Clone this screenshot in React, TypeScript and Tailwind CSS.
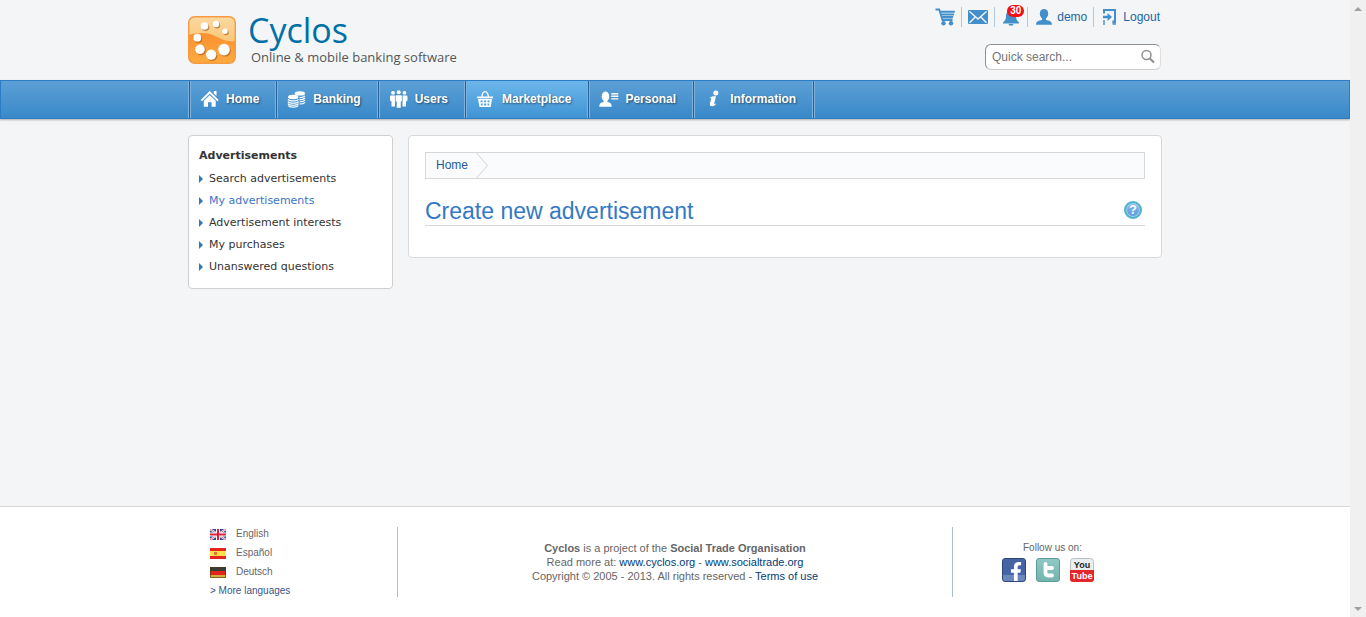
import type { ReactNode } from "react";
import { FaFacebookF } from "react-icons/fa";

function Logo() {
  const dots = [
    [16.5, 10, 3.8],
    [28, 8, 3.2],
    [37, 15.3, 2.7],
    [9.3, 21.7, 3.9],
    [12, 33.3, 4.8],
    [23.2, 38.6, 5.2],
    [36, 33.6, 5.8],
  ];
  return (
    <svg viewBox="0 0 48 48" className="size-12" aria-hidden="true">
      <defs>
        <linearGradient id="logo-top" x1="0" y1="0" x2="0" y2="1">
          <stop offset="0" stopColor="#fbd9a2" />
          <stop offset="0.7" stopColor="#f8c269" />
        </linearGradient>
        <linearGradient id="logo-wave" x1="0" y1="0" x2="0" y2="1">
          <stop offset="0" stopColor="#fb9030" />
          <stop offset="1" stopColor="#fbac3e" />
        </linearGradient>
      </defs>
      <rect x="0.7" y="0.7" width="46.6" height="46.6" rx="6" fill="url(#logo-top)" />
      <path
        d="M.7 19C9 16.500 18 16 26 19.500C34 23.500 39 26 47.300 25V41.300A6 6 0 0 1 41.300 47.300H6.700A6 6 0 0 1 .7 41.300Z"
        fill="url(#logo-wave)"
      />
      <rect x="0.7" y="0.7" width="46.6" height="46.6" rx="6" fill="none" stroke="#f69a45" strokeWidth="1.4" />
      {dots.map(([x, y, r]) => (
        <g key={x}>
          <circle cx={x + 1} cy={y + 1.2} r={r} fill="#a4500f" opacity="0.6" />
          <circle cx={x} cy={y} r={r} fill="#fff" />
        </g>
      ))}
    </svg>
  );
}

function Icon({ children }: { children: ReactNode }) {
  return (
    <svg viewBox="0 0 20 20" className="size-5 shrink-0" fill="currentColor" aria-hidden="true">
      {children}
    </svg>
  );
}

const cart = (
  <Icon>
    <path d="M.5 2.500H4.200L7.500 13H17.500" fill="none" stroke="currentColor" strokeWidth="1.800" />
    <path d="M5 3.800H20L19.500 5.800H5.500ZM6 6.400H19.200L18.700 8.500H6.500ZM6.900 9.100H18.300L17.700 11.400H7.500Z" />
    <circle cx="8.500" cy="16.300" r="2.200" />
    <circle cx="16" cy="16.300" r="2.200" />
  </Icon>
);
const mail = (
  <Icon>
    <rect x="0" y="3" width="20" height="14" rx="1" />
    <path d="M1.500 4.500L10 12L18.500 4.500M1.500 15.800L7.200 10M18.500 15.800L12.800 10" fill="none" stroke="#f3f5f7" strokeWidth="1.400" />
  </Icon>
);
const bell = (
  <Icon>
    <path d="M10 3.500C6.600 3.500 5 6 5 9C5 12 4.300 13.500 2 15.500V16.500H18V15.500C15.700 13.500 15 12 15 9C15 6 13.400 3.500 10 3.500ZM7.500 17H12.500A2.500 1.800 0 0 1 7.500 17Z" />
  </Icon>
);
const person = (
  <Icon>
    <ellipse cx="10" cy="6.800" rx="4.200" ry="4.900" />
    <path d="M8 10H12V13C15 13.500 18 14.200 18 17.800H2C2 14.200 5 13.500 8 13Z" />
  </Icon>
);
const logout = (
  <Icon>
    <path d="M4 6.500V3H15V15.500H12.500" fill="none" stroke="currentColor" strokeWidth="2" />
    <path d="M12.500 13H16V18H12.500ZM3 13H5V18H3Z" opacity="0.7" />
    <path d="M3 8.800H7.500V6L12 10L7.500 14V11.200H3Z" />
  </Icon>
);
const home = (
  <Icon>
    <path d="M9.700 2L18.700 11L17.400 12.200L9.700 4.800L2 12.200L.7 11Z" />
    <path d="M13.800 2H16.500V7L13.800 4.500Z" />
    <path d="M3.800 11.800L9.700 6.200L15.700 11.800V17.800H11.600V13.300H8V17.800H3.800Z" />
  </Icon>
);
const coins = (
  <Icon>
    <ellipse cx="12.800" cy="4.400" rx="5.200" ry="2.200" />
    <ellipse cx="6.200" cy="8" rx="5.200" ry="2.200" />
    <g fill="none" stroke="currentColor" strokeWidth="1.200">
      <path d="M1 10.200C2 12.400 10.400 12.400 11.400 10.200M1 12.400C2 14.600 10.400 14.600 11.400 12.400M1 14.600C2 16.800 10.400 16.800 11.400 14.600M1.200 16.500C2.500 18.600 10 18.600 11.200 16.500" />
      <path d="M12.500 8.600C15 8.600 17 8 18 6.800M12.500 10.800C15 10.800 17 10.200 18 9M12.500 13C15 13 17 12.400 18 11.200M12.500 15C15 15 17 14.400 18 13.300" />
    </g>
  </Icon>
);
const people = (
  <Icon>
    <circle cx="4" cy="3.800" r="1.900" />
    <circle cx="9.700" cy="3.300" r="2" />
    <circle cx="15.400" cy="3.800" r="1.900" />
    <path d="M1.500 6.500H6V17.500H2.500V12.500L1 11.500V7.500ZM13.500 6.500H18L18.500 7.500V11.500L17 12.500V17.500H13.500Z" />
    <path d="M7 6H12.500L13.200 7V12L12 12.800V19H7.500V12.800L6.300 12V7Z" stroke="#4a90cc" strokeWidth="0.500" />
  </Icon>
);
const basket = (
  <Icon>
    <path d="M5.800 9C6 4.500 7.500 2.700 9 2.700S12.200 4.500 12.500 9" fill="none" stroke="currentColor" strokeWidth="1.300" />
    <path d="M1.200 7.500H17V9.300H1.200Z" />
    <path
      fillRule="evenodd"
      d="M2 10H16L14.700 18H3.500ZM4.500 11.500V13.300H6.700V11.500ZM8 11.500V13.300H10.200V11.500ZM11.500 11.500V13.300H13.600V11.500ZM4.900 14.500V16.400H6.700V14.500ZM8 14.500V16.400H10.200V14.500ZM11.500 14.500V16.400H13.200V14.500Z"
    />
  </Icon>
);
const profile = (
  <Icon>
    <ellipse cx="6.500" cy="7.500" rx="3.800" ry="4.900" />
    <path d="M4.700 11H8.400V13C11 13.300 12.800 14.500 12.800 17.800H.2C.2 14.500 2 13.300 4.700 13ZM12.300 4H19.300V5.400H12.300ZM12.300 6.600H19.300V8H12.300ZM12.300 9.200H19.300V10.600H12.300Z" />
  </Icon>
);
const info = (
  <Icon>
    <circle cx="11.800" cy="4" r="2.500" />
    <path d="M5.200 9.200C7.500 7 9.500 7.200 12 7.200L10.300 14.200C10 15.600 11 15.300 12.300 14.300C11.500 16.300 9.800 17.300 8.200 17.300C6 17.300 5.500 16 6 14L7.200 9.800C7.200 8.900 6.300 9 5.200 9.200Z" />
  </Icon>
);

const navItems = [
  { label: "Home", icon: home },
  { label: "Banking", icon: coins },
  { label: "Users", icon: people },
  { label: "Marketplace", icon: basket, active: true },
  { label: "Personal", icon: profile },
  { label: "Information", icon: info },
];

const userItems = [
  { label: "Shopping cart", icon: cart },
  { label: "Messages", icon: mail },
  { label: "Notifications", icon: bell, badge: "30" },
  { label: "demo", icon: person, showLabel: true },
  { label: "Logout", icon: logout, showLabel: true },
];

const menuItems = [
  { label: "Search advertisements" },
  { label: "My advertisements", active: true },
  { label: "Advertisement interests" },
  { label: "My purchases" },
  { label: "Unanswered questions" },
];

function Flag({ children }: { children: ReactNode }) {
  return (
    <svg viewBox="0 0 16 11" className="h-[11px] w-4" aria-hidden="true">
      {children}
    </svg>
  );
}

const languages = [
  {
    label: "English",
    flag: (
      <Flag>
        <rect width="16" height="11" fill="#2b4c9b" />
        <path d="M0 0L16 11M16 0L0 11" stroke="#fff" strokeWidth="2" />
        <path d="M0 0L16 11M16 0L0 11" stroke="#d8384a" strokeWidth="0.700" />
        <path d="M8 0V11M0 5.500H16" stroke="#fff" strokeWidth="4" />
        <path d="M8 0V11M0 5.500H16" stroke="#d8203a" strokeWidth="2" />
      </Flag>
    ),
  },
  {
    label: "Español",
    flag: (
      <Flag>
        <rect width="16" height="11" fill="#e6231e" />
        <rect y="3" width="16" height="5" fill="#fbe04a" />
        <rect x="4" y="4" width="3" height="3" fill="#d87a30" />
      </Flag>
    ),
  },
  {
    label: "Deutsch",
    flag: (
      <Flag>
        <rect width="16" height="4" fill="#3c3c34" />
        <rect y="4" width="16" height="4" fill="#e2251c" />
        <rect y="8" width="16" height="3" fill="#d9ab3c" />
        <rect x="0.500" y="0.500" width="15" height="10" fill="none" stroke="#4a3a18" strokeOpacity="0.600" />
      </Flag>
    ),
  },
];

function Header() {
  return (
    <header className="mx-auto flex h-20 w-full max-w-[974px] justify-between">
      <a href="#" className="flex items-start gap-3 pt-4">
        <Logo />
        <span className="flex flex-col font-['Open_Sans','Noto_Sans',sans-serif]">
          <span className="text-[34px] leading-7 text-[#0070a8]">Cyclos</span>
          <span className="pl-[3px] text-[13px] leading-[26px] text-[#555]">Online &amp; mobile banking software</span>
        </span>
      </a>
      <div className="flex flex-col items-end pt-[7px]">
        <ul className="flex">
          {userItems.map((item, i) => (
            <li key={item.label} className={i > 0 ? "border-l border-[#b3c8d6] pl-1.5" : ""}>
              <a
                href="#"
                aria-label={item.label}
                className={
                  "relative flex h-5 items-center gap-[3px] text-[#428fcb] " +
                  (i < userItems.length - 1 ? "pr-1.5" : "pr-0.5")
                }
              >
                {item.icon}
                {item.showLabel && <span className="text-[#1c66a6]">{item.label}</span>}
                {item.badge && (
                  <span className="absolute -top-0.5 left-1.5 flex h-3 items-center rounded-full bg-[#f20d17] px-[3px] text-[10px] font-bold text-white">
                    {item.badge}
                  </span>
                )}
              </a>
            </li>
          ))}
        </ul>
        <form
          role="search"
          onSubmit={(e) => e.preventDefault()}
          className="mt-[17px] mr-px flex h-[26px] w-44 items-center rounded-md border border-t-[#8f8f8f] border-r-[#ddd] border-b-[#ccc] border-l-[#8f8f8f] bg-white pr-1 pl-1.5"
        >
          <input
            type="text"
            aria-label="Quick search"
            placeholder="Quick search..."
            className="min-w-0 flex-1 bg-transparent outline-none placeholder:text-[#757575]"
          />
          <button type="submit" aria-label="Search" className="text-[#909090]">
            <svg viewBox="0 0 16 16" className="size-4" fill="none" stroke="currentColor" aria-hidden="true">
              <circle cx="6.500" cy="6" r="4.500" strokeWidth="1.500" />
              <path d="M9.800 9.500L14 13.500" strokeWidth="2.200" />
            </svg>
          </button>
        </form>
      </div>
    </header>
  );
}

function Nav() {
  return (
    <nav className="border border-[#2b7cc2] bg-linear-to-b from-[#5c9fd6] to-[#3889c9] shadow-[0_1px_2px_rgba(0,0,0,0.3)]">
      <div className="mx-auto flex max-w-[974px]">
        <ul className="flex border-x border-[#7fb2dc]">
          {navItems.map((item) => (
            <li key={item.label} className="border-l border-[#255f94]">
              <a
                href="#"
                className={
                  "flex h-[37px] items-center gap-1.5 border-x border-[#7fb2dc] pr-[15px] pb-px pl-[9px] font-bold text-white " +
                  (item.active ? "bg-linear-to-b from-[#6cb6eb] to-[#3f94d4]" : "")
                }
              >
                {item.icon}
                <span className="pr-px [text-shadow:1px_1px_2px_rgba(0,0,0,0.5)]">{item.label}</span>
              </a>
            </li>
          ))}
          <li className="border-l border-[#255f94]" aria-hidden="true" />
        </ul>
      </div>
    </nav>
  );
}

function Sidebar() {
  return (
    <aside className="w-[205px] shrink-0 rounded border border-[#cfcfcf] bg-white px-2.5 pt-2 pb-2.5 font-['DejaVu_Sans',sans-serif] text-[11px] text-[#333]">
      <h2 className="mb-px leading-[23px] font-bold">Advertisements</h2>
      <ul>
        {menuItems.map((item) => (
          <li key={item.label}>
            <a href="#" className={"flex items-center gap-1.5 leading-[22px] " + (item.active ? "text-[#3a74c4]" : "")}>
              <svg viewBox="0 0 4 8" className="h-2 w-1" fill="#2f78c0" aria-hidden="true">
                <path d="M0 0L4 4L0 8Z" />
              </svg>
              {item.label}
            </a>
          </li>
        ))}
      </ul>
    </aside>
  );
}

function Content() {
  return (
    <main className="min-w-0 flex-1 rounded border border-[#d9d9d9] bg-white px-4 pt-4 pb-[31px]">
      <nav aria-label="Breadcrumb" className="flex h-[27px] border border-[#d5d7d8] bg-[#fafbfc]">
        <a href="#" className="flex items-start gap-2 pl-2.5 leading-6 text-[#1f5a9c]">
          Home
          <svg viewBox="0 0 12 25" className="h-[25px] w-3" fill="none" stroke="#d0d3d5" aria-hidden="true">
            <path d="M.5 0L11.500 12.500L.5 25" />
          </svg>
        </a>
      </nav>
      <div className="mt-4 flex h-[31px] items-center justify-between border-b border-[#d5d7d8] pr-[3px]">
        <h1 className="pt-0.5 text-[23px] text-[#3379c4]">Create new advertisement</h1>
        <button
          type="button"
          aria-label="Help"
          className="flex size-[18px] items-center justify-center rounded-full border-2 border-[#4db4cd] bg-linear-to-b from-[#8cbcec] to-[#5798dc] text-[13px] font-bold text-white shadow-[inset_0_0_0_1px_#a8d0f2]"
        >
          ?
        </button>
      </div>
    </main>
  );
}

function Footer() {
  return (
    <footer className="border-t border-[#d8d8d8] bg-white py-5 text-[#666]">
      <div className="mx-auto flex h-[70px] max-w-[974px]">
        <ul className="-mt-0.5 w-[209px] pl-[22px] text-[10px]">
          {languages.map((l) => (
            <li key={l.label}>
              <a href="#" className="flex h-[19px] items-center gap-2.5">
                {l.flag}
                <span className="pb-0.5">{l.label}</span>
              </a>
            </li>
          ))}
          <li>
            <a href="#" className="flex h-[19px] items-center pb-0.5 text-[#3a5486]">
              &gt; More languages
            </a>
          </li>
        </ul>
        <div className="flex-1 border-x border-[#a9bfca] pt-3.5 text-center text-[11px] leading-[14px]">
          <p>
            <b>Cyclos</b> is a project of the <b>Social Trade Organisation</b>
          </p>
          <p>
            Read more at: <a href="#" className="text-[#003c78]">www.cyclos.org</a> -{" "}
            <a href="#" className="text-[#003c78]">www.socialtrade.org</a>
          </p>
          <p>
            Copyright © 2005 - 2013. All rights reserved - <a href="#" className="text-[#003c78]">Terms of use</a>
          </p>
        </div>
        <div className="w-[209px] pt-3.5 pl-[49px] text-[10px] leading-[14px]">
          <p className="pl-[21px]">Follow us on:</p>
          <div className="mt-[3px] flex gap-2.5">
            <a
              href="#"
              aria-label="Facebook"
              className="flex size-6 items-end justify-center overflow-hidden rounded-[3px] border border-[#2d4678] bg-linear-to-b from-[#4664a4] from-70% to-[#6c87bb] to-75% pl-1 text-white"
            >
              <FaFacebookF className="size-[19px]" />
            </a>
            <a
              href="#"
              aria-label="Twitter"
              className="flex size-6 items-center justify-center rounded-[3px] border border-[#5a9c99] bg-linear-to-b from-[#8fc8c4] to-[#74b3ae]"
            >
              <svg viewBox="0 0 22 22" className="size-[22px]" fill="none" aria-hidden="true">
                <path
                  d="M8.500 5V13.500Q8.500 16.500 11.500 16.500H15M8.500 9H15"
                  stroke="#fff"
                  strokeWidth="3.800"
                  strokeLinecap="round"
                  strokeLinejoin="round"
                />
              </svg>
            </a>
            <a href="#" aria-label="YouTube">
              <svg viewBox="0 0 24 24" className="size-6" aria-hidden="true">
                <rect x="0.500" y="0.500" width="23" height="23" rx="3" fill="#e9eef0" stroke="#b9c1c4" />
                <path d="M0 12H24V21A3 3 0 0 1 21 24H3A3 3 0 0 1 0 21Z" fill="#e3262b" />
                <g fontFamily="Liberation Sans, sans-serif" fontWeight="700" textAnchor="middle">
                  <text x="12" y="10" fontSize="9" fill="#222">You</text>
                  <text x="12" y="21" fontSize="9" fill="#fff">Tube</text>
                </g>
              </svg>
            </a>
          </div>
        </div>
      </div>
    </footer>
  );
}

function ScrollTrack() {
  return (
    <div className="sticky top-0 flex h-screen w-4 shrink-0 flex-col items-center justify-between bg-[#f0f0f0] pt-[7px] pb-1.5" aria-hidden="true">
      <svg viewBox="0 0 8 4" className="h-1 w-2" fill="#a0a0a0">
        <path d="M0 4L4 0L8 4Z" />
      </svg>
      <svg viewBox="0 0 8 4" className="h-1 w-2" fill="#a0a0a0">
        <path d="M0 0L4 4L8 0Z" />
      </svg>
    </div>
  );
}

export default function App() {
  return (
    <div className="flex font-['Liberation_Sans',Arial,sans-serif] text-[12px] leading-4">
      <div className="flex min-h-screen min-w-0 flex-1 flex-col bg-[#f3f5f7]">
        <Header />
        <Nav />
        <div className="mx-auto flex w-full max-w-[974px] flex-1 items-start gap-[15px] pt-4 pb-4">
          <Sidebar />
          <Content />
        </div>
        <Footer />
      </div>
      <ScrollTrack />
    </div>
  );
}
